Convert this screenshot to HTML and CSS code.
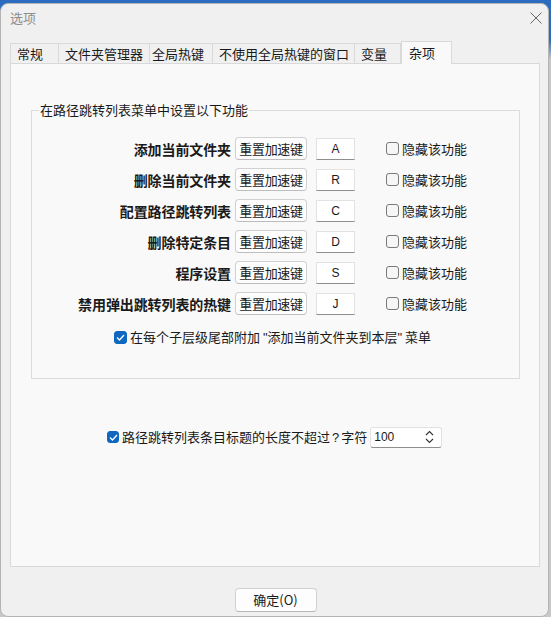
FILE: index.html
```html
<!DOCTYPE html>
<html lang="zh-CN">
<head>
<meta charset="utf-8">
<title>选项</title>
<link rel="stylesheet" href="styles.css">
</head>
<body>
<div class="window">
  <div class="titlebar">
    <span class="title">选项</span>
    <svg class="close" width="12" height="12" viewBox="0 0 12 12"><path d="M0.5 0.5 L11.5 11.5 M11.5 0.5 L0.5 11.5" stroke="#666" stroke-width="1" fill="none"/></svg>
  </div>
  <div class="tabs">
    <div class="tab t1">常规</div>
    <div class="tab t2">文件夹管理器</div>
    <div class="tab t3">全局热键</div>
    <div class="tab t4">不使用全局热键的窗口</div>
    <div class="tab t5">变量</div>
    <div class="tab t6 active">杂项</div>
  </div>
  <div class="panel">
    <fieldset class="group">
      <legend>在路径跳转列表菜单中设置以下功能</legend>
      <div class="rows">
        <div class="row"><span class="lbl">添加当前文件夹</span><span class="btn">重置加速键</span><span class="key">A</span><span class="cb"></span><span class="cbtext">隐藏该功能</span></div>
        <div class="row"><span class="lbl">删除当前文件夹</span><span class="btn">重置加速键</span><span class="key">R</span><span class="cb"></span><span class="cbtext">隐藏该功能</span></div>
        <div class="row"><span class="lbl">配置路径跳转列表</span><span class="btn">重置加速键</span><span class="key">C</span><span class="cb"></span><span class="cbtext">隐藏该功能</span></div>
        <div class="row"><span class="lbl">删除特定条目</span><span class="btn">重置加速键</span><span class="key">D</span><span class="cb"></span><span class="cbtext">隐藏该功能</span></div>
        <div class="row"><span class="lbl">程序设置</span><span class="btn">重置加速键</span><span class="key">S</span><span class="cb"></span><span class="cbtext">隐藏该功能</span></div>
        <div class="row"><span class="lbl">禁用弹出跳转列表的热键</span><span class="btn">重置加速键</span><span class="key">J</span><span class="cb"></span><span class="cbtext">隐藏该功能</span></div>
      </div>
      <div class="append-row">
        <span class="cb checked"><svg width="9" height="7" viewBox="0 0 9 7"><path d="M1 3.5 L3.5 6 L8 1" stroke="#fff" stroke-width="1.3" fill="none"/></svg></span>
        <span class="cbtext">在每个子层级尾部附加 <span class="q">"</span>添加当前文件夹到本层<span class="q">"</span> 菜单</span>
      </div>
    </fieldset>
    <div class="length-row">
      <span class="cb checked"><svg width="9" height="7" viewBox="0 0 9 7"><path d="M1 3.5 L3.5 6 L8 1" stroke="#fff" stroke-width="1.3" fill="none"/></svg></span>
      <span class="cbtext">路径跳转列表条目标题的长度不超过<span class="qm">?</span>字符</span>
      <span class="spin"><span class="spin-val">100</span>
        <svg class="spin-arrows" width="9" height="14" viewBox="0 0 9 14"><path d="M1 5 L4.5 1.5 L8 5 M1 9 L4.5 12.5 L8 9" stroke="#333" stroke-width="1.1" fill="none"/></svg>
      </span>
    </div>
  </div>
  <div class="footer">
    <span class="okbtn">确定(O)</span>
  </div>
</div>
</body>
</html>
```

FILE: styles.css
```css
* { box-sizing: border-box; }
html, body { margin: 0; padding: 0; }
body {
  width: 551px;
  height: 617px;
  overflow: hidden;
  background: linear-gradient(#2c6cc0 0, #2c6cc0 40px, #c8c8c8 60px, #c8c8c8 100%);
  font-family: "Noto Sans CJK SC", "Noto Sans", sans-serif;
  font-size: 13px;
  color: #1a1a1a;
}
.window {
  margin-top: 3px;
  width: 549px;
  height: 614px;
  background: #f0f0f0;
  border: 1px solid #b4b4b4;
  border-radius: 8px;
  overflow: hidden;
}
.titlebar {
  height: 27px;
  padding: 0 6px 0 9px;
  display: flex;
  align-items: center;
  justify-content: space-between;
}
.title { color: #8c8c8c; line-height: 16px; }
.close { margin-top: 1px; }

.tabs {
  margin-top: 10px;
  margin-left: 9px;
  height: 22px;
  display: flex;
  align-items: flex-end;
}
.tab {
  height: 20px;
  line-height: 19px;
  padding-left: 6px;
  border: 1px solid #d9d9d9;
  border-bottom: none;
  border-right: none;
  background: #f0f0f0;
  white-space: nowrap;
}
.t1 { width: 48px; }
.t2 { width: 91px; }
.t3 { width: 63px; padding-left: 2px; }
.t4 { width: 142px; }
.t5 { width: 47px; border-right: 1px solid #d9d9d9; }
.tab.active {
  width: 51px;
  line-height: 21px;
  background: #f9f9f9;
  border-right: 1px solid #d9d9d9;
  padding-left: 7px;
  position: relative;
  z-index: 1;
  margin-bottom: -1px;
  height: 23px;
}
.panel {
  margin-left: 9px;
  width: 530px;
  height: 504px;
  background: #f9f9f9;
  border: 1px solid #d9d9d9;
  padding-top: 37px;
}
.group {
  margin: 0 19px 0 20px;
  padding: 0;
  border: 1px solid #dcdcdc;
  min-width: 0;
}
.group legend {
  margin-left: 7px;
  padding: 0 1px;
  line-height: 18px;
}
.rows {
  padding-top: 18px;
  display: flex;
  flex-direction: column;
  gap: 8px;
}
.row {
  display: flex;
  align-items: center;
  height: 23px;
}
.lbl {
  width: 199px;
  text-align: right;
  font-weight: bold;
  font-size: 14px;
  white-space: nowrap;
  margin-right: 4px;
  letter-spacing: -0.1px;
}
.btn {
  width: 72px;
  height: 23px;
  line-height: 21px;
  text-align: center;
  background: #fdfdfd;
  border: 1px solid #d0d0d0;
  border-bottom-color: #bdbdbd;
  border-radius: 4px;
  letter-spacing: -0.3px;
}
.key {
  margin-left: 9px;
  width: 39px;
  height: 22px;
  line-height: 21px;
  text-align: center;
  background: #ffffff;
  border: 1px solid #e2e2e2;
  border-bottom: 1px solid #8e8e8e;
  font-family: "Liberation Sans", "Noto Sans", sans-serif;
  font-size: 12px;
}
.cb {
  width: 13px;
  height: 13px;
  border: 1px solid #7a7a7a;
  border-radius: 3px;
  background: #f6f6f6;
  display: inline-flex;
  align-items: center;
  justify-content: center;
  flex: none;
}
.cb.checked {
  background: #0f67c0;
  border-color: #0f67c0;
}
.row .cb { margin-left: 31px; }
.cbtext { margin-left: 3px; line-height: 18px; white-space: nowrap; }
.q { font-family: "Liberation Sans", sans-serif; }
.qm { font-family: "Liberation Sans", sans-serif; padding: 0 2px; }
.append-row {
  display: flex;
  align-items: center;
  height: 22px;
  margin-top: 11px;
  margin-bottom: 30px;
  padding-left: 82px;
}
.length-row {
  display: flex;
  align-items: center;
  height: 22px;
  margin-top: 47px;
  padding-left: 96px;
}
.length-row .cb { width: 12px; height: 12px; }
.spin {
  margin-left: 3px;
  width: 72px;
  height: 21px;
  background: #ffffff;
  border: 1px solid #e2e2e2;
  border-bottom: 1px solid #8e8e8e;
  border-radius: 3px;
  display: flex;
  align-items: center;
  justify-content: space-between;
  padding: 0 7px 0 3px;
}
.spin-val {
  font-family: "Liberation Sans", "Noto Sans", sans-serif;
  font-size: 12px;
}
.footer {
  display: flex;
  justify-content: center;
  padding-top: 21px;
  padding-left: 2px;
}
.okbtn {
  width: 82px;
  height: 24px;
  line-height: 22px;
  text-align: center;
  background: #fdfdfd;
  border: 1px solid #d0d0d0;
  border-bottom-color: #b8b8b8;
  border-radius: 4px;
}
```
